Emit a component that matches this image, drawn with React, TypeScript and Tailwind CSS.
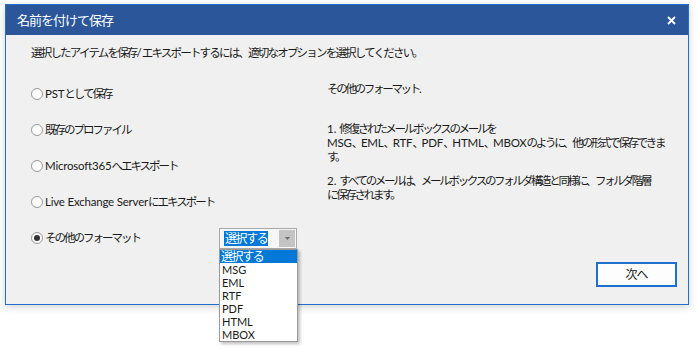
import React from "react";

const font = {
  fontFamily: '"Lato", "Noto Sans CJK JP", sans-serif',
};

function J({ t, k = "tracking-[-2px]" }: { t: string; k?: string }) {
  const parts = t.split(/([\u3000-\u30ff\u3400-\u9fff\uff00-\uffef]+)/);
  return (
    <>
      {parts.map((p, i) =>
        i % 2 === 1 ? (
          <span key={i} className={k}>
            {p}
          </span>
        ) : (
          <span key={i}>{p}</span>
        )
      )}
    </>
  );
}

function Radio({ checked, label }: { checked?: boolean; label: string }) {
  return (
    <div className="h-[36px] flex items-center">
      <span className="w-[12px] h-[12px] rounded-full border border-[#9a9a9a] bg-[#fbfbfb] flex items-center justify-center shrink-0">
        {checked && <span className="w-[6px] h-[6px] rounded-full bg-[#333]" />}
      </span>
      <span className="ml-[2px] text-[11.5px] leading-[16px] text-[#1a1a1a] whitespace-nowrap tracking-[-0.2px]">
        <J t={label} />
      </span>
    </div>
  );
}

const R = "tracking-[-2.3px]";

export default function App() {
  const items = ["MSG", "EML", "RTF", "PDF", "HTML", "MBOX"];
  return (
    <div className="w-[699px] h-[349px] bg-white relative overflow-hidden" style={font}>
      <div className="ml-[5px] mt-[4px] w-[684px] h-[301px] border border-[#1e6fd0] bg-[#f0f0f0] flex flex-col shadow-[0_2px_8px_rgba(0,0,0,0.18)]">
        <div className="h-[30px] bg-[#2b579a] flex items-center justify-between pl-[11px] pr-[12px] shrink-0">
          <span className="text-white text-[13px] leading-[18px] tracking-[-1px]">名前を付けて保存</span>
          <svg width="9" height="9" viewBox="0 0 9 9">
            <path d="M1 1 L8 8 M8 1 L1 8" stroke="white" strokeWidth="1.8" />
          </svg>
        </div>
        <div className="flex-1 flex flex-col pl-[25px] pt-[10px] relative">
          <div className="text-[11.5px] leading-[16px] text-[#1a1a1a] whitespace-nowrap">
            <J t="選択したアイテムを保存/エキスポートするには、適切なオプションを選択してください。" k="tracking-[-1.8px]" />
          </div>
          <div className="flex mt-[15px]">
            <div className="w-[296px] flex flex-col">
              <Radio label="PSTとして保存" />
              <Radio label="既存のプロファイル" />
              <Radio label="Microsoft365へエキスポート" />
              <Radio label="Live Exchange Serverにエキスポート" />
              <div className="flex items-center">
                <div className="w-[188px]">
                  <Radio checked label="その他のフォーマット" />
                </div>
                <div className="w-[78px] h-[21px] border border-[#a8a8a8] bg-[#f7f7f7] flex items-center justify-between pl-[4px] pr-[1px] mt-[1px]">
                  <span className="bg-[#0078d7] text-white text-[12px] leading-[15px] px-[1px] whitespace-nowrap tracking-[-1.4px]">選択する</span>
                  <span className="w-[16px] h-[17px] bg-[#c4c4c4] flex items-center justify-center">
                    <svg width="5" height="3" viewBox="0 0 5 3">
                      <path d="M0 0 L5 0 L2.5 3 Z" fill="#6a6a6a" />
                    </svg>
                  </span>
                </div>
              </div>
            </div>
            <div className="pt-[6px] text-[11.5px] leading-[14px] text-[#1a1a1a] whitespace-nowrap">
              <div>
                <J t="その他のフォーマット." k={R} />
              </div>
              <div className="mt-[26px]">
                <J t="1. 修復されたメールボックスのメールを" k={R} />
                <br />
                <span className="tracking-[-0.2px]">
                  <J t="MSG、EML、RTF、PDF、HTML、MBOXのように、他の形式で保存できま" k={R} />
                </span>
                <br />
                <J t="す。" k={R} />
              </div>
              <div className="mt-[10px]">
                <J t="2. すべてのメールは、メールボックスのフォルダ構造と同様に、フォルダ階層" k={R} />
                <br />
                <J t="に保存されます。" k={R} />
              </div>
            </div>
          </div>
          <div className="flex justify-end pr-[11px] mt-[6px]">
            <button className="w-[81px] h-[25px] border-2 border-[#1e6fd0] bg-[#fdfdfd] text-[12px] text-[#1a1a1a] flex items-center justify-center tracking-[-1px]">
              次へ
            </button>
          </div>
        </div>
      </div>
      <div className="absolute left-[219px] top-[249px] w-[79px] border border-[#9a9a9a] bg-white shadow-[2px_2px_3px_rgba(0,0,0,0.25)] text-[11px] leading-[13px] text-[#1a1a1a]">
        <div className="bg-[#0078d7] text-white pl-[1px] h-[13px] flex items-center text-[12px] tracking-[-1.4px]">選択する</div>
        {items.map((it) => (
          <div key={it} className="pl-[2px] h-[13px] flex items-center">
            {it}
          </div>
        ))}
      </div>
    </div>
  );
}
